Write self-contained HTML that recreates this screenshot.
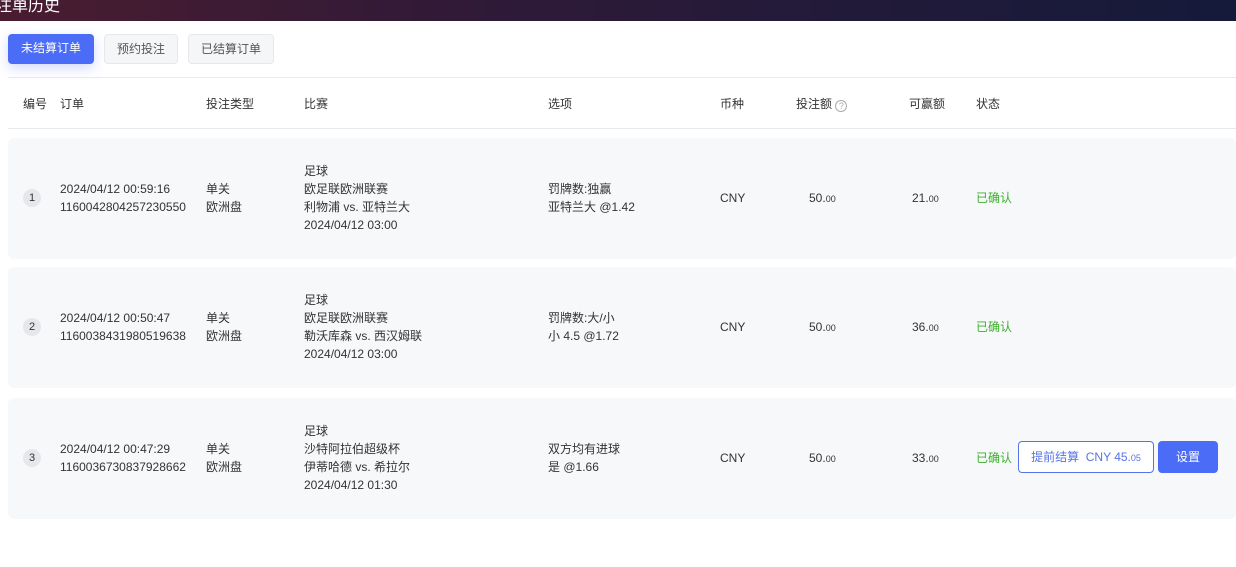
<!DOCTYPE html>
<html><head><meta charset="utf-8"><style>
*{margin:0;padding:0;box-sizing:border-box}
body{width:1236px;height:567px;background:#fff;font-family:"Liberation Sans","Noto Sans CJK SC",sans-serif;font-size:12px;color:#333;position:relative;overflow:hidden}
.top{position:absolute;left:0;top:0;width:1236px;height:21px;background:linear-gradient(90deg,#4a1c30,#2e1a38 40%,#151a3a);}
.top span{position:absolute;left:-4px;top:-8px;color:#fff;font-size:16px;font-weight:normal}
.tab{position:absolute;top:34px;height:30px;border-radius:4px;line-height:28px;text-align:center;font-size:12px}
.t1{left:8px;width:86px;background:#4b6cf7;color:#fff;box-shadow:0 4px 12px rgba(75,108,247,.25)}
.t2{left:104px;width:74px;background:#f5f6f8;border:1px solid #e6e8ee;color:#555}
.t3{left:188px;width:86px;background:#f5f6f8;border:1px solid #e6e8ee;color:#555}
.hl{position:absolute;left:8px;width:1228px;height:1px;background:#e8e9ec}
.th{position:absolute;top:95px;color:#333}
.row{position:absolute;left:8px;width:1228px;height:121px;background:#f7f8fa;border-radius:6px}
.c{position:absolute;line-height:18px;white-space:nowrap}
.badge{position:absolute;left:15px;width:18px;height:18px;border-radius:9px;background:#e6e7ea;text-align:center;line-height:18px;font-size:11px}
.g{color:#3bb02a}
small{font-size:9px}
.b1{position:absolute;left:1010px;width:136px;height:32px;border:1px solid #5574e8;border-radius:4px;background:#fff;color:#5574e8;text-align:center;line-height:30px}
.b2{position:absolute;left:1150px;width:60px;height:32px;border-radius:4px;background:#4b6cf7;color:#fff;text-align:center;line-height:32px}
</style></head><body>
<div class="top"><span>注单历史</span></div>
<div class="tab t1">未结算订单</div><div class="tab t2">预约投注</div><div class="tab t3">已结算订单</div>
<div class="hl" style="top:77px"></div><div class="hl" style="top:128px"></div>
<div class="th" style="left:23px">编号</div><div class="th" style="left:60px">订单</div><div class="th" style="left:206px">投注类型</div><div class="th" style="left:304px">比赛</div><div class="th" style="left:548px">选项</div><div class="th" style="left:720px">币种</div><div class="th" style="left:796px">投注额 <span style="display:inline-block;width:12px;height:12px;border:1px solid #aaa;border-radius:50%;font-size:9px;line-height:10px;text-align:center;color:#aaa;vertical-align:-1px">?</span></div><div class="th" style="left:909px">可赢额</div><div class="th" style="left:976px">状态</div>

<div class="row" style="top:138px">
<div class="badge" style="top:51px">1</div>
<div class="c" style="left:52px;top:42px">2024/04/12 00:59:16<br>1160042804257230550</div>
<div class="c" style="left:198px;top:42px">单关<br>欧洲盘</div>
<div class="c" style="left:296px;top:24px">足球<br>欧足联欧洲联赛<br>利物浦 vs. 亚特兰大<br>2024/04/12 03:00</div>
<div class="c" style="left:540px;top:42px">罚牌数:独赢<br>亚特兰大 @1.42</div>
<div class="c" style="left:712px;top:51px">CNY</div>
<div class="c" style="left:801px;top:51px">50.<small>00</small></div>
<div class="c" style="left:904px;top:51px">21.<small>00</small></div>
<div class="c g" style="left:968px;top:51px">已确认</div>
</div>
<div class="row" style="top:267px">
<div class="badge" style="top:51px">2</div>
<div class="c" style="left:52px;top:42px">2024/04/12 00:50:47<br>1160038431980519638</div>
<div class="c" style="left:198px;top:42px">单关<br>欧洲盘</div>
<div class="c" style="left:296px;top:24px">足球<br>欧足联欧洲联赛<br>勒沃库森 vs. 西汉姆联<br>2024/04/12 03:00</div>
<div class="c" style="left:540px;top:42px">罚牌数:大/小<br>小 4.5 @1.72</div>
<div class="c" style="left:712px;top:51px">CNY</div>
<div class="c" style="left:801px;top:51px">50.<small>00</small></div>
<div class="c" style="left:904px;top:51px">36.<small>00</small></div>
<div class="c g" style="left:968px;top:51px">已确认</div>
</div>
<div class="row" style="top:398px">
<div class="badge" style="top:51px">3</div>
<div class="c" style="left:52px;top:42px">2024/04/12 00:47:29<br>1160036730837928662</div>
<div class="c" style="left:198px;top:42px">单关<br>欧洲盘</div>
<div class="c" style="left:296px;top:24px">足球<br>沙特阿拉伯超级杯<br>伊蒂哈德 vs. 希拉尔<br>2024/04/12 01:30</div>
<div class="c" style="left:540px;top:42px">双方均有进球<br>是 @1.66</div>
<div class="c" style="left:712px;top:51px">CNY</div>
<div class="c" style="left:801px;top:51px">50.<small>00</small></div>
<div class="c" style="left:904px;top:51px">33.<small>00</small></div>
<div class="c g" style="left:968px;top:51px">已确认</div>
<div class="b1" style="top:43px">提前结算 &nbsp;CNY 45.<small>05</small></div>
<div class="b2" style="top:43px">设置</div>
</div>
</body></html>
